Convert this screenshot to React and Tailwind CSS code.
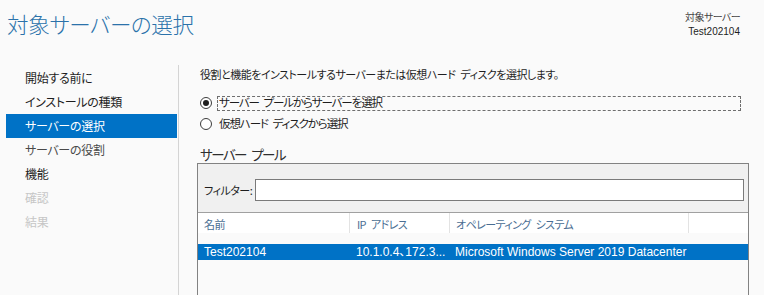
import React from 'react';

const JP = "font-['Noto_Sans_CJK_JP',sans-serif] [font-feature-settings:'palt']";

const steps = [
  { label: '開始する前に', tone: 'text-[#1e1e1e]' },
  { label: 'インストールの種類', tone: 'text-[#1e1e1e]' },
  { label: 'サーバーの選択', tone: 'text-white bg-[#0072c6]' },
  { label: 'サーバーの役割', tone: 'text-[#4a4a4a]' },
  { label: '機能', tone: 'text-[#1e1e1e]' },
  { label: '確認', tone: 'text-[#c6c6c6]' },
  { label: '結果', tone: 'text-[#c6c6c6]' },
];

function Radio({ checked, label, focused }) {
  return (
    <div className="flex items-center h-[16px]">
      <span className="w-[12px] h-[12px] rounded-full border border-[#3c3c3c] bg-white flex items-center justify-center shrink-0">
        {checked && <span className="w-[6px] h-[6px] rounded-full bg-[#1e1e1e]" />}
      </span>
      <span
        className={
          'ml-[5px] h-[15px] flex items-center pl-[1px] text-[11.5px] tracking-[-1.1px] leading-none text-[#1e1e1e] whitespace-pre ' +
          (focused ? 'w-[524px] border border-dashed border-[#6e6e6e]' : 'border border-transparent')
        }
      >
        {label}
      </span>
    </div>
  );
}

export default function App() {
  return (
    <div className={`w-[764px] h-[295px] overflow-hidden bg-[#fafafa] ${JP}`}>
      {/* header */}
      <div className="h-[65px] flex justify-between">
        <h1 className="pl-[7px] pt-[9px] text-[21.5px] leading-[30px] font-light text-[#2b72aa] tracking-[-0.3px]">
          対象サーバーの選択
        </h1>
        <div className="pt-[9px] pr-[24px] text-[10px] leading-[15px] text-right">
          <div className="text-[#444] tracking-[-0.6px]">対象サーバー</div>
          <div className="text-[#1e1e1e] font-['Liberation_Sans',sans-serif]">Test202104</div>
        </div>
      </div>

      <div className="flex h-[230px]">
        {/* wizard steps */}
        <nav className="w-[179px] pl-[6px] pr-[1px] pt-[1px] border-r border-[#d4d4d4]">
          {steps.map((s) => (
            <div key={s.label} className={`h-[24px] flex items-center pl-[19px] text-[12px] tracking-[-0.3px] ${s.tone}`}>
              {s.label}
            </div>
          ))}
        </nav>

        {/* content */}
        <div className="flex-1 pl-[18px] pr-[15px]">
          <div className="pl-[3px]">
            <p className="pt-[1px] h-[17px] text-[11px] tracking-[-0.5px] leading-[16px] text-[#1e1e1e] whitespace-pre">
              役割と機能をインストールするサーバーまたは仮想ハード{'\u2002'}ディスクを選択します。
            </p>
            <div className="mt-[13px] flex flex-col gap-[5px]">
              <Radio checked focused label={'サーバー\u2002プールからサーバーを選択'} />
              <Radio label={'仮想ハード\u2002ディスクから選択'} />
            </div>
            <h2 className="mt-[13px] h-[18px] text-[13.5px] tracking-[-1.5px] leading-[18px] text-[#2e2e2e] whitespace-pre">
              {'サーバー\u2002プール'}
            </h2>
          </div>

          <div className="border border-[#828282] h-[140px]">
            <div className="bg-[#f0f0f0] border-b border-[#a0a0a0] pt-[15px] pb-[11px] pl-[6px] pr-[4px] flex items-center">
              <span className="text-[11px] text-[#1e1e1e] tracking-[-0.5px] w-[51px]">フィルター:</span>
              <div className="flex-1 h-[22px] border border-[#7a7a7a] bg-white" />
            </div>

            <div className="flex h-[20px] text-[11px] tracking-[-0.6px] text-[#4a6e93] bg-white whitespace-pre">
              <div className="w-[151px] pl-[6px] pt-[3px]">名前</div>
              <div className="w-[100px] pl-[7px] pt-[3px] border-l border-[#e3e3e3]">{'IP\u2002アドレス'}</div>
              <div className="w-[239px] pl-[6px] pt-[3px] border-l border-[#e3e3e3]">{'オペレーティング\u2002システム'}</div>
              <div className="flex-1 border-l border-[#e3e3e3]" />
            </div>

            <div className="mt-[11px] h-[16px] flex items-center bg-[#0072c6] text-white text-[12px] font-['Liberation_Sans','Noto_Sans_CJK_JP',sans-serif]">
              <div className="w-[151px] pl-[6px]">Test202104</div>
              <div className="w-[100px] pl-[7px]">10.1.0.4、172.3...</div>
              <div className="pl-[6px]">Microsoft Windows Server 2019 Datacenter</div>
            </div>
          </div>
        </div>
      </div>
    </div>
  );
}
